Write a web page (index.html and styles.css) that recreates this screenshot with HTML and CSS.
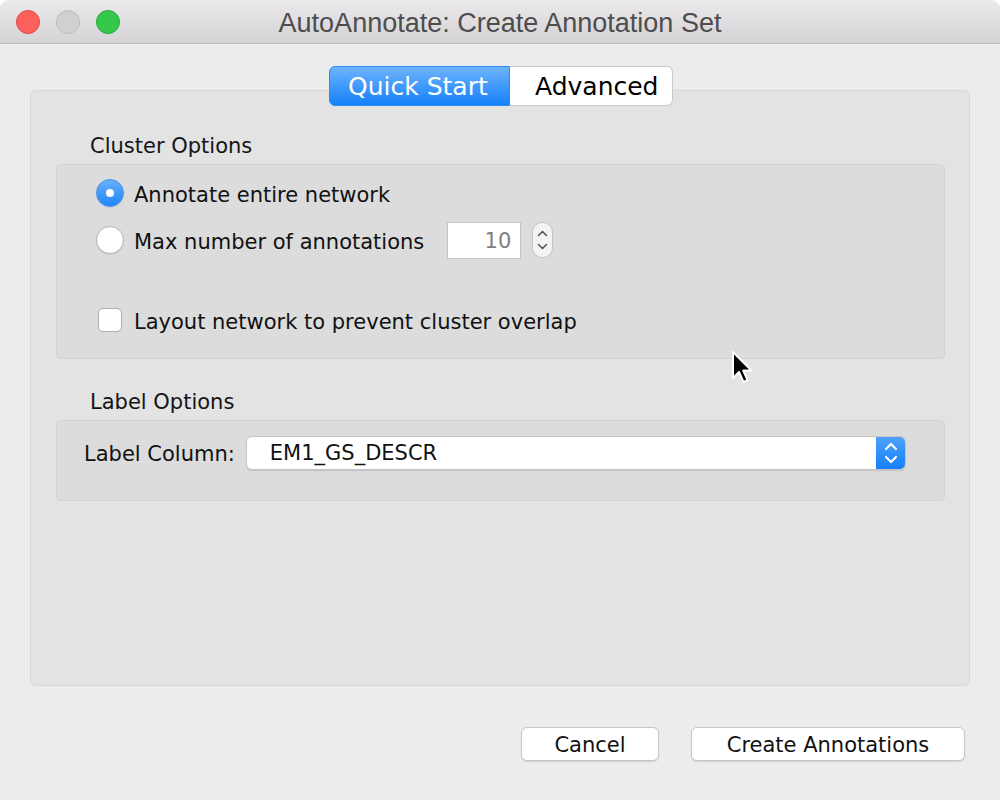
FILE: index.html
```html
<!DOCTYPE html>
<html>
<head>
<meta charset="utf-8">
<title>AutoAnnotate: Create Annotation Set</title>
<link rel="stylesheet" href="styles.css">
</head>
<body>
<div class="window">
  <header class="titlebar">
    <div class="lights">
      <span class="light red"></span>
      <span class="light gray"></span>
      <span class="light green"></span>
    </div>
    <div class="title">AutoAnnotate: Create Annotation Set</div>
    <div></div>
  </header>
  <main class="content">
    <div class="tabs">
      <span class="tab tab-quick active">Quick Start</span>
      <span class="tab tab-adv">Advanced</span>
    </div>
    <section class="panel">
      <h2 class="group-title">Cluster Options</h2>
      <div class="group cluster">
        <div class="row row-first"><span class="radio on"><span class="dot"></span></span><span class="txt">Annotate entire network</span></div>
        <div class="row row-second"><span class="radio"></span><span class="txt">Max number of annotations</span><span class="spin-input">10</span>
          <span class="stepper">
            <svg width="13" height="24" viewBox="0 0 13 24"><path d="M2.5 7.5 L6.5 3.5 L10.5 7.5" fill="none" stroke="#555" stroke-width="1.6" stroke-linecap="round" stroke-linejoin="round"/><path d="M2.5 16.5 L6.5 20.5 L10.5 16.5" fill="none" stroke="#555" stroke-width="1.6" stroke-linecap="round" stroke-linejoin="round"/></svg>
          </span>
        </div>
        <div class="row"><span class="checkbox"></span><span class="txt">Layout network to prevent cluster overlap</span></div>
      </div>
      <h2 class="group-title second">Label Options</h2>
      <div class="group labelgroup">
        <span class="label-text">Label Column:</span>
        <div class="select">
          <span class="select-text">EM1_GS_DESCR</span>
          <span class="select-btn">
            <svg width="16" height="26" viewBox="0 0 16 26"><path d="M3 9 L8 4 L13 9" fill="none" stroke="#fff" stroke-width="2.2" stroke-linecap="round" stroke-linejoin="round"/><path d="M3 17 L8 22 L13 17" fill="none" stroke="#fff" stroke-width="2.2" stroke-linecap="round" stroke-linejoin="round"/></svg>
          </span>
        </div>
      </div>
    </section>
    <footer class="buttons">
      <button class="btn btn-cancel">Cancel</button>
      <button class="btn btn-create">Create Annotations</button>
    </footer>
  </main>
  <svg class="cursor" width="26" height="38" viewBox="0 0 26 38"><g transform="translate(2,2)"><path d="M0 0 L0 26 L6 20 L10.5 30 L14.5 28.2 L10.2 18.6 L18.5 18.6 Z" fill="#000" stroke="#fff" stroke-width="2" stroke-linejoin="round"/></g></svg>
</div>
</body>
</html>
```
FILE: styles.css
```css
html { background: #ffffff; }
body {
  margin: 0;
  font-family: "DejaVu Sans", sans-serif;
  color: #111;
}
.window {
  width: 1000px;
  height: 800px;
  background: #ececec;
  position: relative;
  overflow: hidden;
  border-radius: 9px 9px 0 0;
}
.titlebar {
  height: 43px;
  border-bottom: 1px solid #b9b9b9;
  background: linear-gradient(#ebe9eb, #d4d2d4);
  display: grid;
  grid-template-columns: 1fr auto 1fr;
  align-items: center;
}
.lights {
  display: flex;
  gap: 16px;
  padding-left: 16px;
}
.light {
  width: 24px;
  height: 24px;
  box-sizing: border-box;
  border-radius: 50%;
  border: 1px solid;
}
.red { background: #fc605c; border-color: #de4a45; }
.gray { background: #d0d0d0; border-color: #bdbdbd; }
.green { background: #34c84a; border-color: #28a83a; }
.title {
  font-family: "Liberation Sans", Arial, sans-serif;
  font-size: 27px;
  color: #4d4d4d;
  padding-top: 3px;
}
.content {
  padding: 22px 30px 0;
}
.tabs {
  display: flex;
  justify-content: center;
  position: relative;
  z-index: 1;
  margin-bottom: -16px;
  padding-left: 2px;
}
.tab {
  height: 40px;
  box-sizing: border-box;
  line-height: 40px;
  font-size: 25px;
  text-align: left;
  background: #fff;
  color: #000;
  border: 1px solid #c8c8c8;
}
.tab-quick {
  width: 181px;
  padding-left: 18px;
  border-radius: 6px 0 0 6px;
}
.tab-adv {
  width: 163px;
  padding-left: 25px;
  border-left: none;
  border-radius: 0 6px 6px 0;
}
.tab.active {
  background: linear-gradient(#6db3fb, #1581fb);
  border-color: #2c8af4;
  color: #fff;
}
.panel {
  height: 596px;
  box-sizing: border-box;
  background: #e3e3e3;
  border: 1px solid #d7d7d7;
  border-radius: 6px;
  padding: 40px 24px 0 25px;
}
.group-title {
  margin: 0 0 7px;
  padding: 2px 0 0 34px;
  height: 24px;
  font-size: 21px;
  font-weight: normal;
  line-height: 26px;
  color: #141414;
}
.group-title.second {
  margin-top: 28px;
}
.group {
  background: #dcdcdc;
  border: 1px solid #d2d2d2;
  border-radius: 5px;
}
.cluster {
  padding: 13px 0 23px 39px;
}
.row {
  display: flex;
  align-items: center;
  height: 30px;
  font-size: 21px;
}
.txt {
  padding-top: 3px;
}
.row-first { margin-bottom: 17px; }
.row-second { margin-bottom: 50px; }
.radio {
  width: 28px;
  height: 28px;
  box-sizing: border-box;
  border-radius: 50%;
  background: #fff;
  border: 1px solid #b6b6b6;
  box-shadow: 0 1px 1px rgba(0,0,0,0.08);
  margin-right: 10px;
  display: flex;
  align-items: center;
  justify-content: center;
}
.radio.on {
  background: linear-gradient(#68b0fb, #2085fb);
  border-color: #3f92ef;
}
.dot {
  width: 8px;
  height: 8px;
  border-radius: 50%;
  background: #fff;
}
.spin-input {
  width: 74px;
  height: 37px;
  box-sizing: border-box;
  margin-left: 23px;
  border: 1px solid #c6c6c6;
  background: #fff;
  color: #7f7f7f;
  text-align: right;
  padding: 2px 9px 0 0;
  line-height: 33px;
}
.stepper {
  width: 21px;
  height: 36px;
  box-sizing: border-box;
  margin-left: 11px;
  border: 1px solid #c4c4c4;
  border-radius: 10px;
  background: #f4f4f4;
  display: flex;
  align-items: center;
  justify-content: center;
}
.checkbox {
  width: 24px;
  height: 24px;
  box-sizing: border-box;
  border: 1px solid #adadad;
  border-radius: 5px;
  background: #fff;
  margin: 0 12px 0 2px;
}
.labelgroup {
  display: flex;
  align-items: center;
  padding: 15px 38px 30px 27px;
  font-size: 21px;
}
.label-text {
  margin-right: 11px;
  padding-top: 2px;
}
.select {
  flex: 1;
  height: 34px;
  box-sizing: border-box;
  display: flex;
  background: #fff;
  border: 1px solid #c4c4c4;
  border-radius: 6px;
  overflow: hidden;
  box-shadow: 0 1px 1px rgba(0,0,0,0.12);
}
.select-text {
  flex: 1;
  padding: 1px 0 0 23px;
  line-height: 31px;
}
.select-btn {
  width: 29px;
  background: linear-gradient(#4ea2fb, #1580fb);
  display: flex;
  align-items: center;
  justify-content: center;
}
.buttons {
  display: flex;
  justify-content: flex-end;
  gap: 32px;
  margin-top: 41px;
  padding-right: 5px;
}
.btn {
  height: 34px;
  box-sizing: border-box;
  padding: 2px 0 0;
  text-align: center;
  font-family: "DejaVu Sans", sans-serif;
  font-size: 21px;
  color: #111;
  background: #fff;
  border: 1px solid #c6c6c6;
  border-radius: 6px;
  box-shadow: 0 1px 1px rgba(0,0,0,0.12);
}
.btn-cancel { width: 138px; }
.btn-create { width: 274px; }
.cursor {
  position: absolute;
  left: 731px;
  top: 350px;
}
```
